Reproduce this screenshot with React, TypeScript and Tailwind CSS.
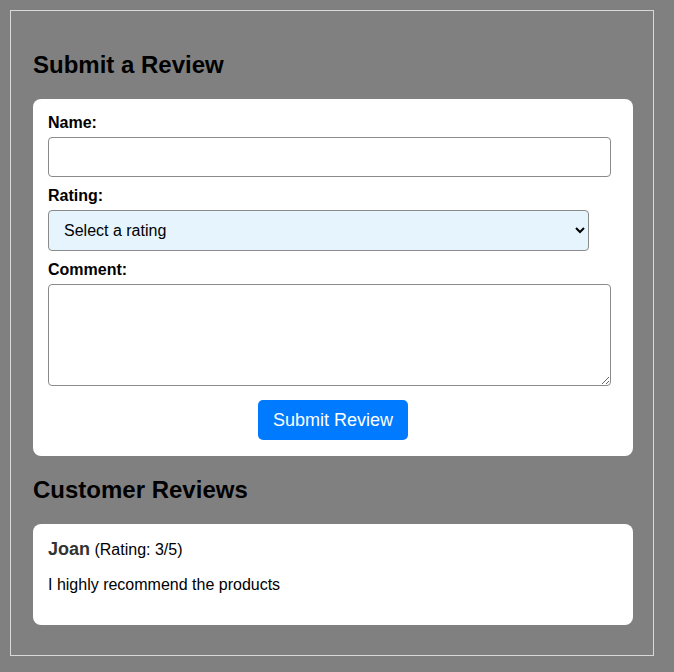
import { useState } from "react";

const App = () => {
	const [name, setName] = useState("");
	const [rating, setRating] = useState("");
	const [comment, setComment] = useState("");

	return (
		<div className="min-h-screen bg-[#808080] pt-[10px] pb-[16px] pl-[10px] pr-[20px] font-['Liberation_Sans',Arial,sans-serif] text-black">
			<div className="border border-[#d9d9d9] pl-[22px] pr-[20px] pt-[20px] pb-[30px]">
				{/* Form */}
				<h2 className="text-[24px] font-bold leading-[28px] my-[20px]">Submit a Review</h2>
				<div className="w-[600px] bg-white rounded-[8px] pt-[15px] pb-[16px] px-[15px]">
					<label className="block text-[16px] font-bold leading-[18px] mb-[5px]">Name:</label>
					<input
						type="text"
						value={name}
						onChange={(e) => setName(e.target.value)}
						className="block w-[563px] h-[40px] px-[10px] border border-[#8a8a8a] rounded-[4px] bg-white text-[16px] outline-none"
					/>
					<label className="block text-[16px] font-bold leading-[18px] mt-[10px] mb-[5px]">Rating:</label>
					<select
						value={rating}
						onChange={(e) => setRating(e.target.value)}
						className="block w-[541px] h-[41px] pl-[11px] pr-[6px] border border-[#8a8a8a] rounded-[4px] bg-[#e5f4fd] text-[16px] outline-none appearance-auto"
					>
						<option value="">Select a rating</option>
						<option value="1">1</option>
						<option value="2">2</option>
						<option value="3">3</option>
						<option value="4">4</option>
						<option value="5">5</option>
					</select>
					<label className="block text-[16px] font-bold leading-[18px] mt-[10px] mb-[5px]">Comment:</label>
					<textarea
						value={comment}
						onChange={(e) => setComment(e.target.value)}
						className="block w-[563px] h-[102px] p-[10px] border border-[#8a8a8a] rounded-[4px] bg-white text-[16px] outline-none resize"
					/>
					<div className="flex justify-center mt-[14px]">
						<button className="w-[150px] h-[40px] bg-[#007bff] text-white text-[18px] rounded-[5px]">
							Submit Review
						</button>
					</div>
				</div>

				{/* Reviews */}
				<h2 className="text-[24px] font-bold leading-[28px] my-[20px]">Customer Reviews</h2>
				<div className="w-[600px] bg-white rounded-[8px] p-[15px]">
					<p className="leading-[21px] text-[16px]">
						<strong className="text-[18px] text-[#333]">Joan</strong> (Rating: 3/5)
					</p>
					<p className="text-[16px] leading-[18px] mt-[16px] mb-[16px]">I highly recommend the products</p>
				</div>
			</div>
		</div>
	);
};

export default App;
